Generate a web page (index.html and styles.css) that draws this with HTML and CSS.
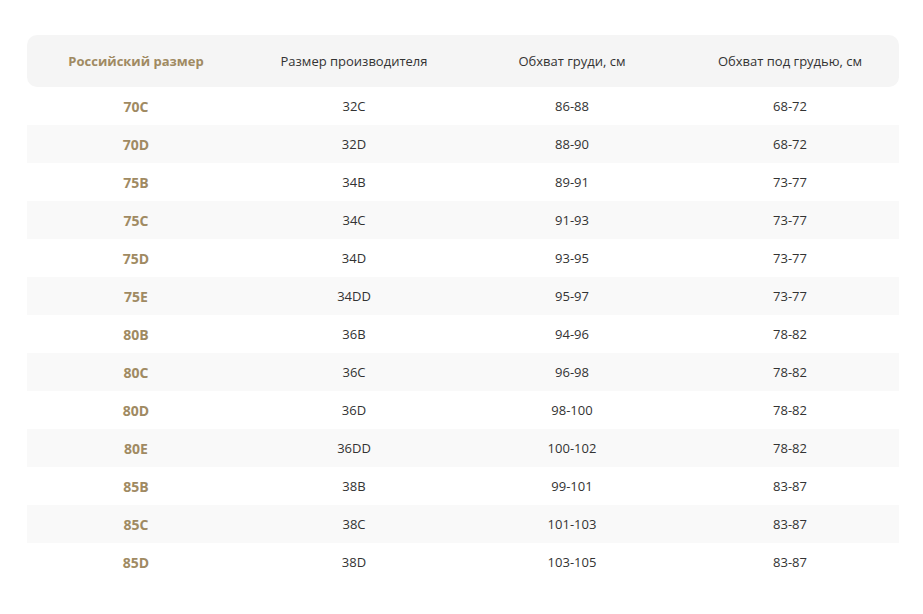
FILE: index.html
```html
<!DOCTYPE html>
<html lang="ru">
<head>
<meta charset="utf-8">
<link rel="stylesheet" href="styles.css">
</head>
<body>
<div class="page">
<table class="sizes">
<thead>
<tr><th class="ru">Российский размер</th><th>Размер производителя</th><th>Обхват груди, см</th><th>Обхват под грудью, см</th></tr>
</thead>
<tbody>
<tr><td class="ru">70C</td><td>32C</td><td>86-88</td><td>68-72</td></tr>
<tr><td class="ru">70D</td><td>32D</td><td>88-90</td><td>68-72</td></tr>
<tr><td class="ru">75B</td><td>34B</td><td>89-91</td><td>73-77</td></tr>
<tr><td class="ru">75C</td><td>34C</td><td>91-93</td><td>73-77</td></tr>
<tr><td class="ru">75D</td><td>34D</td><td>93-95</td><td>73-77</td></tr>
<tr><td class="ru">75E</td><td>34DD</td><td>95-97</td><td>73-77</td></tr>
<tr><td class="ru">80B</td><td>36B</td><td>94-96</td><td>78-82</td></tr>
<tr><td class="ru">80C</td><td>36C</td><td>96-98</td><td>78-82</td></tr>
<tr><td class="ru">80D</td><td>36D</td><td>98-100</td><td>78-82</td></tr>
<tr><td class="ru">80E</td><td>36DD</td><td>100-102</td><td>78-82</td></tr>
<tr><td class="ru">85B</td><td>38B</td><td>99-101</td><td>83-87</td></tr>
<tr><td class="ru">85C</td><td>38C</td><td>101-103</td><td>83-87</td></tr>
<tr><td class="ru">85D</td><td>38D</td><td>103-105</td><td>83-87</td></tr>
</tbody>
</table>
</div>
</body>
</html>
```
FILE: styles.css
```css
html, body {
  margin: 0;
  padding: 0;
  background: #ffffff;
}
body {
  font-family: "Open Sans", "Noto Sans", sans-serif;
  color: #333333;
}
.page {
  padding: 35px 24px 0 27px;
}
.sizes {
  width: 872px;
  border-collapse: separate;
  border-spacing: 0;
  table-layout: fixed;
}
.sizes th,
.sizes td {
  text-align: center;
  padding: 0;
  font-size: 13px;
  font-weight: 400;
}
.sizes thead th {
  height: 52px;
  background: #f5f5f5;
}
.sizes thead th:first-child {
  border-radius: 10px 0 0 10px;
}
.sizes thead th:last-child {
  border-radius: 0 10px 10px 0;
}
.sizes tbody td {
  height: 38px;
}
.sizes tbody tr:nth-child(even) td {
  background: #f9f9f9;
}
.sizes .ru {
  color: #a08a62;
  font-weight: 700;
  font-size: 14px;
}
.sizes thead .ru {
  font-size: 13px;
}
```
